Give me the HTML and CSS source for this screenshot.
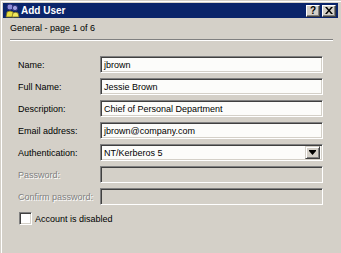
FILE: index.html
```html
<!DOCTYPE html>
<html>
<head>
<meta charset="utf-8">
<link rel="stylesheet" href="styles.css">
</head>
<body>
<div class="window">
  <div class="titlebar">
    <svg class="appicon" width="15" height="15" viewBox="0 0 15 15">
      <circle cx="5" cy="4" r="3" fill="#8c8cd8" stroke="#30307a" stroke-width="1"/>
      <circle cx="10" cy="5" r="2.6" fill="#a0a0e0" stroke="#30307a" stroke-width="1"/>
      <path d="M1 14 L2 9 Q5 7 8 9 L9 14 Z" fill="#e8e040" stroke="#7a7020" stroke-width="0.8"/>
      <path d="M7 14 L8 10 Q10.5 8.5 13 10 L14 14 Z" fill="#f0e860" stroke="#7a7020" stroke-width="0.8"/>
    </svg>
    <span class="title">Add User</span>
    <div class="tbuttons">
      <div class="tbtn">?</div>
      <div class="tbtn close">
        <svg width="8" height="7" viewBox="0 0 8 7"><path d="M0 0h2l2 2.5 2-2.5h2l-3 3.5 3 3.5h-2l-2-2.5-2 2.5h-2l3-3.5z" fill="#000"/></svg>
      </div>
    </div>
  </div>
  <div class="header">General - page 1 of 6</div>
  <div class="sep"></div>
  <div class="form">
    <label class="lbl">Name:</label>
    <div class="field">jbrown</div>
    <label class="lbl">Full Name:</label>
    <div class="field">Jessie Brown</div>
    <label class="lbl">Description:</label>
    <div class="field">Chief of Personal Department</div>
    <label class="lbl">Email address:</label>
    <div class="field">jbrown@company.com</div>
    <label class="lbl">Authentication:</label>
    <div class="field combo"><span>NT/Kerberos 5</span>
      <div class="dropbtn"><svg width="7" height="5" viewBox="0 0 7 5"><path d="M0 0h7v1l-3.5 4-3.5-4z" fill="#000"/></svg></div>
    </div>
    <label class="lbl disabled">Password:</label>
    <div class="field off"></div>
    <label class="lbl disabled">Confirm password:</label>
    <div class="field off"></div>
  </div>
  <div class="checkrow">
    <span class="checkbox"></span>
    <span class="cblabel">Account is disabled</span>
  </div>
</div>
</body>
</html>
```
FILE: styles.css
```css
html, body {
  margin: 0;
  padding: 0;
  background: #d4d0c8;
}
.window {
  width: 341px;
  height: 253px;
  box-sizing: border-box;
  padding: 3px 3px 0 3px;
  background: #d4d0c8;
  box-shadow: inset 1px 1px 0 #d4d0c8, inset 2px 2px 0 #ffffff;
  font-family: "Liberation Sans", Arial, sans-serif;
  font-size: 9px;
  color: #000;
  overflow: hidden;
}
.titlebar {
  height: 15px;
  background: #0a246a;
  display: flex;
  align-items: center;
  padding-left: 2px;
}
.appicon {
  display: block;
  flex: none;
}
.title {
  color: #fff;
  font-weight: bold;
  font-size: 10px;
  margin-left: 1px;
  flex: 1;
}
.tbuttons {
  display: flex;
  gap: 2px;
  margin-right: 2px;
}
.tbtn {
  width: 14px;
  height: 12px;
  box-sizing: border-box;
  background: #d4d0c8;
  border-top: 1px solid #fff;
  border-left: 1px solid #fff;
  border-right: 1px solid #404040;
  border-bottom: 1px solid #404040;
  box-shadow: inset -1px -1px 0 #808080;
  display: flex;
  align-items: center;
  justify-content: center;
  font-weight: bold;
  font-size: 10px;
  line-height: 10px;
}
.tbtn svg { display: block; }
.header {
  margin-top: 4px;
  padding-left: 7px;
  height: 12px;
  line-height: 12px;
}
.sep {
  margin: 5px 5px 0 7px;
  height: 0;
  border-top: 1px solid #808080;
  border-bottom: 1px solid #fff;
}
.form {
  margin-top: 15px;
  padding-left: 15px;
  display: grid;
  grid-template-columns: 82px 223px;
  grid-auto-rows: 17px;
  row-gap: 5px;
}
.lbl {
  display: flex;
  align-items: center;
  white-space: nowrap;
}
.lbl.disabled {
  color: #808080;
  text-shadow: 1px 1px 0 #fff;
}
.field {
  box-sizing: border-box;
  height: 17px;
  background: #fcfcfa;
  border-top: 1px solid #808080;
  border-left: 1px solid #808080;
  border-right: 1px solid #fff;
  border-bottom: 1px solid #fff;
  box-shadow: inset 1px 1px 0 #404040, inset -1px -1px 0 #d4d0c8;
  padding-left: 3px;
  display: flex;
  align-items: center;
  white-space: nowrap;
  overflow: hidden;
}
.field.off {
  background: #d4d0c8;
}
.combo {
  justify-content: space-between;
  padding-right: 2px;
}
.dropbtn {
  width: 15px;
  height: 13px;
  box-sizing: border-box;
  background: #d4d0c8;
  border-top: 1px solid #d4d0c8;
  border-left: 1px solid #d4d0c8;
  border-right: 1px solid #404040;
  border-bottom: 1px solid #404040;
  box-shadow: inset 1px 1px 0 #fff, inset -1px -1px 0 #808080;
  display: flex;
  align-items: center;
  justify-content: center;
}
.dropbtn svg { display: block; }
.checkrow {
  margin-top: 7px;
  padding-left: 16px;
  display: flex;
  align-items: center;
  gap: 3px;
}
.checkbox {
  width: 13px;
  height: 13px;
  box-sizing: border-box;
  background: #fff;
  border-top: 1px solid #808080;
  border-left: 1px solid #808080;
  border-right: 1px solid #fff;
  border-bottom: 1px solid #fff;
  box-shadow: inset 1px 1px 0 #404040, inset -1px -1px 0 #d4d0c8;
}
```
